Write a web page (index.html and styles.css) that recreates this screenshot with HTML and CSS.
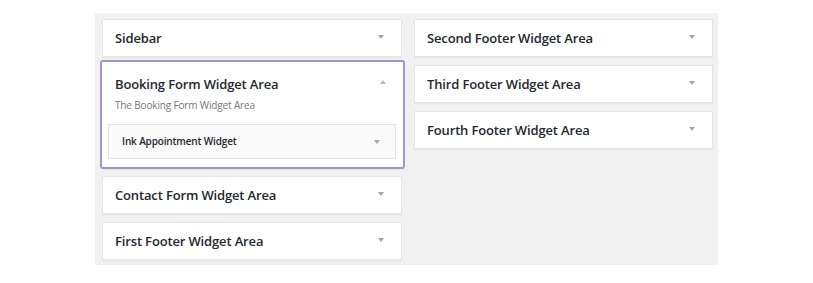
FILE: index.html
```html
<!DOCTYPE html>
<html lang="en">
<head>
    <meta charset="UTF-8">
    <meta name="viewport" content="width=device-width, initial-scale=1.0">
    <title>Widgets</title>
    <link rel="stylesheet" href="styles.css">
</head>
<body>

<div class="widgets-panel">
    <div class="column column-left">
        <div class="area">
            <h3 class="area-title">Sidebar</h3>
            <span class="arrow"></span>
        </div>

        <div class="area area-open">
            <div class="area-head">
                <h3 class="area-title">Booking Form Widget Area</h3>
                <span class="arrow arrow-up"></span>
            </div>
            <p class="area-desc">The Booking Form Widget Area</p>
            <div class="widget">
                <h4 class="widget-title">Ink Appointment Widget</h4>
                <span class="arrow"></span>
            </div>
        </div>

        <div class="area">
            <h3 class="area-title">Contact Form Widget Area</h3>
            <span class="arrow"></span>
        </div>
        <div class="area">
            <h3 class="area-title">First Footer Widget Area</h3>
            <span class="arrow"></span>
        </div>
    </div>

    <div class="column column-right">
        <div class="area">
            <h3 class="area-title">Second Footer Widget Area</h3>
            <span class="arrow"></span>
        </div>
        <div class="area">
            <h3 class="area-title">Third Footer Widget Area</h3>
            <span class="arrow"></span>
        </div>
        <div class="area">
            <h3 class="area-title">Fourth Footer Widget Area</h3>
            <span class="arrow"></span>
        </div>
    </div>
</div>

</body>
</html>
```

FILE: styles.css
```css
* {
    box-sizing: border-box;
}
body {
    margin: 0;
    background: #fff;
    font-family: "Open Sans", Arial, sans-serif;
    color: #23282d;
}
.widgets-panel {
    display: flex;
    align-items: flex-start;
    gap: 12px;
    width: 623px;
    margin: 13px 0 0 95px;
    padding: 6px 5px 5px 7px;
    background: #f1f1f1;
}
.column-left {
    width: 300px;
}
.column-right {
    width: 299px;
}
.area {
    display: flex;
    align-items: center;
    height: 38px;
    padding: 0 17px 0 12px;
    margin-bottom: 8px;
    background: #fff;
    border: 1px solid #e5e5e5;
    box-shadow: 0 1px 1px rgba(0, 0, 0, 0.04);
}
.column .area:last-child {
    margin-bottom: 0;
}
.area-title {
    flex: 1;
    margin: 0;
    font-size: 13px;
    font-weight: 600;
    line-height: 36px;
    letter-spacing: -0.15px;
}
.arrow {
    width: 0;
    height: 0;
    margin-bottom: 2px;
    border-left: 3px solid transparent;
    border-right: 3px solid transparent;
    border-top: 4px solid #a0a5aa;
}
.arrow-up {
    border-top: none;
    border-bottom: 4px solid #b4b9be;
}

/* expanded area */
.area.area-open {
    display: block;
    height: auto;
    margin: -5px -3px 7px -2px;
    padding: 12px 0 8px;
    border: 2px solid #a593c9;
    border-radius: 3px;
}
.area-head {
    display: flex;
    align-items: flex-start;
    padding: 0 17px 0 13px;
}
.area-open .area-title {
    line-height: 20px;
}
.area-open .arrow-up {
    margin-top: 6px;
}
.area-desc {
    margin: 3px 0 11px;
    padding-left: 13px;
    font-size: 10px;
    line-height: 16px;
    letter-spacing: -0.15px;
    color: #72777c;
}
.widget {
    display: flex;
    align-items: center;
    height: 35px;
    margin: 0 7px 0 6px;
    padding: 0 15px 0 13px;
    background: #fafafa;
    border: 1px solid #e5e5e5;
}
.widget-title {
    flex: 1;
    margin: 0;
    font-size: 10px;
    font-weight: 600;
    line-height: 33px;
    letter-spacing: -0.15px;
}
.widget .arrow {
    margin-bottom: 0;
}
```
